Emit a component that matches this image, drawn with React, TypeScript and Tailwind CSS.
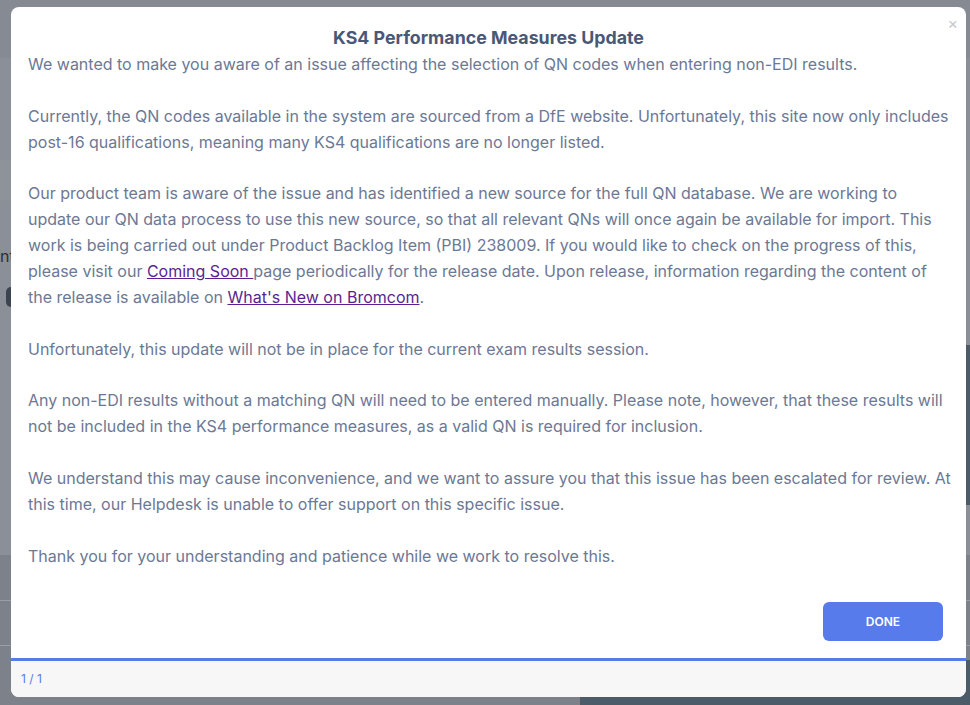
import React from "react";

export default function App() {
  const p = "m-0";
  return (
    <div
      className="relative w-[970px] h-[705px] overflow-hidden bg-[#8b8f97]"
      style={{ fontFamily: "Inter, 'Noto Sans', sans-serif" }}
    >
      {/* faint background page */}
      <div className="absolute left-0 top-0 w-full h-[58px] bg-[#868a92]" />
      <div className="absolute left-0 top-[160px] w-full h-[40px] bg-[#8e9299]" />
      <div className="absolute left-0 top-[244px] text-[16px] text-[#2c2f36]">nt</div>
      <div className="absolute left-[6px] top-[287px] w-[10px] h-[20px] rounded-full bg-[#3c4450]" />
      <div className="absolute left-0 top-[555px] w-full h-[150px] bg-[#7d8189]" />
      <div className="absolute left-0 top-[600px] w-full h-[1px] bg-[#9a9ea5]" />
      <div className="absolute left-0 top-[645px] w-full h-[1px] bg-[#9a9ea5]" />
      <div className="absolute left-[580px] top-[660px] w-[390px] h-[45px] bg-[#4b5b68]" />
      <div className="absolute left-[960px] top-[345px] w-[10px] h-[160px] bg-[#4b5b68]" />

      {/* modal */}
      <div className="absolute left-[11px] top-[7px] w-[955px] h-[690px] bg-white rounded-[8px] overflow-hidden flex flex-col">
        <button className="absolute right-[8px] top-[8px] text-[16px] leading-none text-[#c4c7cc]">×</button>
        <div className="flex-1 flex flex-col pl-[17px] pr-[14px] pt-[19px]">
          <h2 className="m-0 text-center pr-[3px] text-[17.8px] leading-[23px] font-bold text-[#4a5878]">
            KS4 Performance Measures Update
          </h2>
          <div className="mt-[2px] text-[16px] leading-[26px] text-[#6c7894] flex flex-col gap-[25.6px]">
            <p className={p}>
              We wanted to make you aware of an issue affecting the selection of QN codes when entering non-EDI results.
            </p>
            <p className={p}>
              Currently, the QN codes available in the system are sourced from a DfE website. Unfortunately, this site now only includes post-16 qualifications, meaning many KS4 qualifications are no longer listed.
            </p>
            <p className={p}>
              Our product team is aware of the issue and has identified a new source for the full QN database. We are working to update our QN data process to use this new source, so that all relevant QNs will once again be available for import. This work is being carried out under Product Backlog Item (PBI) 238009. If you would like to check on the progress of this, please visit our{" "}
              <a href="#" className="text-[#5b1f8f] underline">Coming Soon </a>page periodically for the release date. Upon release, information regarding the content of the release is available on{" "}
              <a href="#" className="text-[#5b1f8f] underline">What's New on Bromcom</a>.
            </p>
            <p className={p}>
              Unfortunately, this update will not be in place for the current exam results session.
            </p>
            <p className={p}>
              Any non-EDI results without a matching QN will need to be entered manually. Please note, however, that these results will not be included in the KS4 performance measures, as a valid QN is required for inclusion.
            </p>
            <p className={p}>
              We understand this may cause inconvenience, and we want to assure you that this issue has been escalated for review. At this time, our Helpdesk is unable to offer support on this specific issue.
            </p>
            <p className={p}>
              Thank you for your understanding and patience while we work to resolve this.
            </p>
          </div>
          <div className="flex justify-end mt-auto mb-[17px] pr-[9px]">
            <button className="w-[120px] h-[39px] rounded-[6px] bg-[#587bec] text-white text-[12px] font-semibold">
              DONE
            </button>
          </div>
        </div>
        <div className="h-[3px] bg-[#587bec]" />
        <div className="h-[36px] bg-[#f7f7f7] flex items-center px-[10px] text-[12px] text-[#587bec]">
          1 / 1
        </div>
      </div>
    </div>
  );
}
